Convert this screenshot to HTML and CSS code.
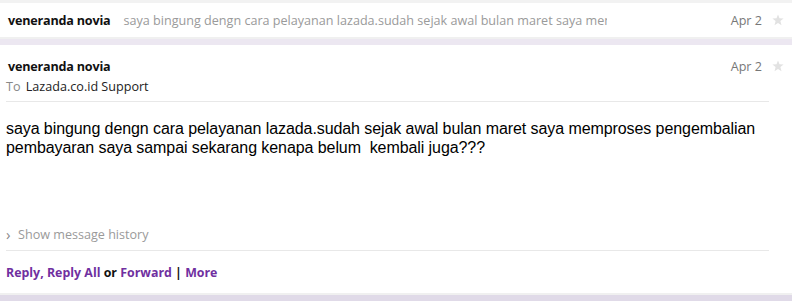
FILE: index.html
```html
<!DOCTYPE html>
<html>
<head>
<meta charset="utf-8">
<link rel="stylesheet" href="styles.css">
</head>
<body>
<div class="thread">
  <div class="row collapsed">
    <span class="from">veneranda novia</span>
    <span class="snippet">saya bingung dengn cara pelayanan lazada.sudah sejak awal bulan maret saya memproses pengembalian pembayaran saya sampai sekarang kenapa belum kembali juga???</span>
    <span class="date">Apr 2</span>
    <svg class="star" viewBox="0 0 12 12" width="12" height="12"><path d="M6 0.5 L7.5 4.3 L11.6 4.5 L8.4 7.1 L9.5 11.2 L6 8.9 L2.5 11.2 L3.6 7.1 L0.4 4.5 L4.5 4.3 Z"/></svg>
  </div>
  <div class="sep"></div>
  <div class="card">
    <div class="head">
      <div class="head-top">
        <span class="from">veneranda novia</span>
        <span class="date">Apr 2</span>
        <svg class="star" viewBox="0 0 12 12" width="12" height="12"><path d="M6 0.5 L7.5 4.3 L11.6 4.5 L8.4 7.1 L9.5 11.2 L6 8.9 L2.5 11.2 L3.6 7.1 L0.4 4.5 L4.5 4.3 Z"/></svg>
      </div>
      <div class="to"><span class="to-label">To</span> <span class="to-name">Lazada.co.id Support</span></div>
    </div>
    <div class="body">saya bingung dengn cara pelayanan lazada.sudah sejak awal bulan maret saya memproses pengembalian pembayaran saya sampai sekarang kenapa belum&nbsp; kembali juga???</div>
    <div class="history"><span class="chev">&rsaquo;</span><span class="hist-text">Show message history</span></div>
    <div class="actions">
      <a class="link">Reply</a><span class="link">,</span> <a class="link">Reply All</a> <span class="plain">or</span> <a class="link">Forward</a> <span class="plain">|</span> <a class="link">More</a>
    </div>
  </div>
  <div class="sep bottom"></div>
</div>
</body>
</html>
```
FILE: styles.css
```css
html, body { margin: 0; padding: 0; background: #fff; }
body { font-family: "Open Sans", "Noto Sans", sans-serif; font-size: 12.6px; color: #1a1a1a; }
.thread { width: 792px; border-top: 3px solid #f2f2f2; }
.row { display: flex; align-items: center; height: 34px; padding: 0 8px 0 8px; background: #fff; }
.from { font-weight: 700; color: #111; letter-spacing: -0.2px; }
.snippet { color: #9a9a9a; margin-left: 13px; width: 484px; overflow: hidden; white-space: nowrap; flex: none; }
.date { margin-left: auto; color: #777; font-size: 12.6px; }
.star { fill: #e2e2e2; margin-left: 10px; }
.sep { height: 2px; background: #f0f0f0; border-bottom: 6px solid #ece7f1; }
.sep.bottom { border-bottom-color: #e0dae8; height: 2px; margin-bottom: 5px; }
.card { background: #fff; padding: 0 23px 0 6px; }
.head { border-bottom: 1px solid #e8e8e8; padding: 11px 0 6px 0; }
.head-top { display: flex; align-items: center; height: 20px; padding-left: 2px; margin-right: -15px; }
.to { margin-top: 2px; }
.to-label { color: #888; }
.to-name { color: #222; margin-left: 2px; }
.body { font-family: "Liberation Sans", Arial, sans-serif; font-size: 16px; letter-spacing: -0.08px; line-height: 19px; color: #000; padding: 17px 0 0 0; height: 102px; }
.history { color: #9a9a9a; font-size: 12.6px; padding: 5px 0 7px 0; border-bottom: 1px solid #e8e8e8; display: flex; align-items: center; }
.chev { color: #888; font-size: 15px; width: 12px; line-height: 17px; }
.actions { padding: 13px 0 12px 0; font-weight: 700; font-size: 12.4px; }
.link { color: #7030a0; text-decoration: none; }
.plain { color: #111; }
```
